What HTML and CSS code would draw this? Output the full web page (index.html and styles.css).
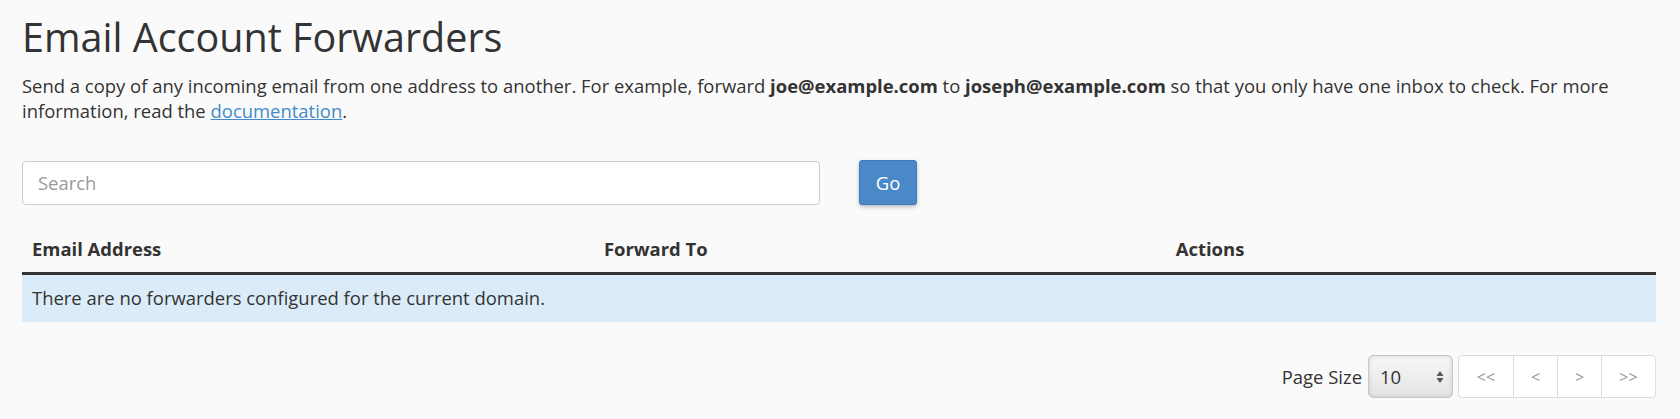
FILE: index.html
```html
<!DOCTYPE html>
<html>
<head>
<meta charset="utf-8">
<link rel="stylesheet" href="styles.css">
</head>
<body>
<div class="page">
  <h1 class="title">Email Account Forwarders</h1>
  <p class="intro">Send a copy of any incoming email from one address to another. For example, forward <strong>joe@example.com</strong> to <strong>joseph@example.com</strong> so that you only have one inbox to check. For more information, read the <a href="#" class="link">documentation</a>.</p>

  <div class="search-row">
    <input class="search-input" type="text" placeholder="Search">
    <button class="btn-go">Go</button>
  </div>

  <table class="grid">
    <thead>
      <tr>
        <th class="col-email">Email Address</th>
        <th class="col-fwd">Forward To</th>
        <th class="col-actions">Actions</th>
      </tr>
    </thead>
    <tbody>
      <tr class="info-row">
        <td colspan="3">There are no forwarders configured for the current domain.</td>
      </tr>
    </tbody>
  </table>

  <div class="pager-row">
    <span class="page-size-label">Page Size</span>
    <div class="select-box">
      <span class="select-value">10</span>
      <svg class="select-arrows" width="8" height="14" viewBox="0 0 8 14"><path d="M4 1 L7.5 6 L0.5 6 Z M4 13 L7.5 8 L0.5 8 Z" fill="#555"/></svg>
    </div>
    <div class="pager">
      <span class="pg-btn">&lt;&lt;</span>
      <span class="pg-btn">&lt;</span>
      <span class="pg-btn">&gt;</span>
      <span class="pg-btn">&gt;&gt;</span>
    </div>
  </div>
</div>
</body>
</html>
```

FILE: styles.css
```css
html, body {
  margin: 0;
  padding: 0;
  background: #fafafa;
}
body {
  font-family: "Open Sans", "Liberation Sans", sans-serif;
  color: #333;
  font-size: 18.45px;
}
.page {
  padding: 0 24px 0 22px;
}
.title {
  font-size: 39.5px;
  font-weight: 400;
  line-height: 43px;
  margin: 16px 0 0 0;
  color: #333;
}
.intro {
  margin: 14px 0 0 0;
  font-size: 18.45px;
  line-height: 25.2px;
}
.intro strong {
  font-weight: 700;
}
.link {
  color: #428bca;
  text-decoration: underline;
}
.search-row {
  display: flex;
  align-items: center;
  margin-top: 37px;
}
.search-input {
  box-sizing: border-box;
  width: 798px;
  height: 44px;
  border: 1px solid #ccc;
  border-radius: 4px;
  background: #fff;
  padding: 0 15px;
  font-family: "Open Sans", sans-serif;
  font-size: 18.45px;
  color: #333;
  outline: none;
}
.search-input::placeholder {
  color: #999;
}
.btn-go {
  margin-left: 39px;
  box-sizing: border-box;
  width: 58px;
  height: 45px;
  background: #4a88c8;
  border: 1px solid #3f7bbb;
  border-radius: 3px;
  color: #fff;
  font-family: "Open Sans", sans-serif;
  font-size: 18.45px;
  box-shadow: 0 2px 4px rgba(0,0,0,0.25);
}
.grid {
  width: 100%;
  border-collapse: collapse;
  margin-top: 21px;
}
.grid th {
  text-align: left;
  font-weight: 700;
  font-size: 18.45px;
  padding: 10px 10px 11px 10px;
  border-bottom: 3px solid #333;
  line-height: 25px;
}
.col-email, .col-fwd { width: 35%; }
.col-actions { width: 30%; }
.info-row td {
  background: #dbecf8;
  padding: 10px 10px 12px 10px;
  line-height: 25px;
}
.pager-row {
  display: flex;
  justify-content: flex-end;
  align-items: center;
  margin-top: 33px;
}
.page-size-label {
  margin-right: 6px;
}
.select-box {
  box-sizing: border-box;
  width: 85px;
  height: 43px;
  border: 1px solid #c8c8c8;
  border-radius: 5px;
  background: linear-gradient(#f7f7f7, #e4e4e4);
  box-shadow: inset 0 0 4px rgba(0,0,0,0.15);
  display: flex;
  align-items: center;
  justify-content: space-between;
  padding: 0 8px 0 11px;
}
.select-value {
  font-size: 18.45px;
}
.pager {
  display: flex;
  margin-left: 5px;
  height: 43px;
  border: 1px solid #ddd;
  border-radius: 4px;
  background: #fff;
  box-sizing: border-box;
}
.pg-btn {
  display: flex;
  align-items: center;
  justify-content: center;
  color: #999;
  font-size: 16px;
  border-left: 1px solid #ddd;
}
.pg-btn:first-child { border-left: none; width: 54px; }
.pg-btn:nth-child(2) { width: 43px; }
.pg-btn:nth-child(3) { width: 43px; }
.pg-btn:nth-child(4) { width: 53px; }
```
